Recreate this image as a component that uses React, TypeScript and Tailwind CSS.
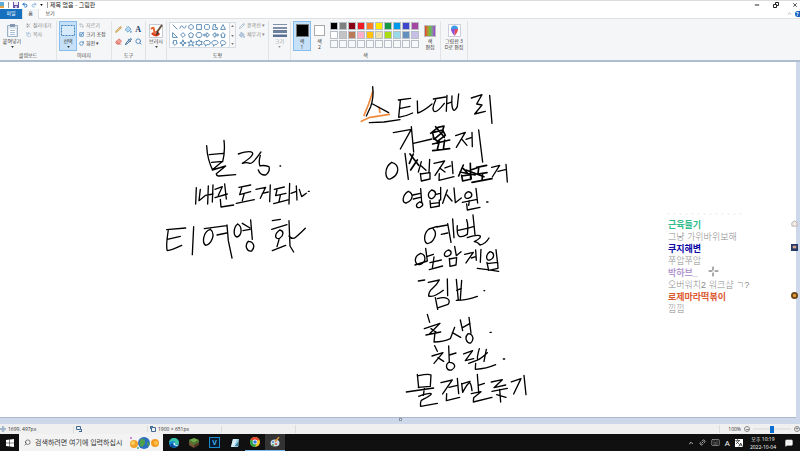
import type { ReactNode } from "react";
import { Scissors, Copy, Crop, Scaling, RotateCw, Pencil, PaintBucket, Eraser, Pipette, Search, Undo2, Redo2, Minus, X, ChevronUp, Move, MessageSquareText, Keyboard, Link2, Languages } from "lucide-react";

const palette = [
  "#000000", "#7f7f7f", "#880015", "#ed1c24", "#ff7f27", "#ffe900", "#159a43", "#0098e8", "#3f48cc", "#a349a4",
  "#ffffff", "#c3c3c3", "#b97a57", "#ffaec9", "#ffc20e", "#efe4b0", "#aadc12", "#99d9ea", "#6490be", "#c8bfe7",
  "#f7f8f9", "#f7f8f9", "#f7f8f9", "#f7f8f9", "#f7f8f9", "#f7f8f9", "#f7f8f9", "#f7f8f9", "#f7f8f9", "#f7f8f9",
];

const shapes = [
  "M1 1 7 7", "M0 6Q2 0 4 4T8 2", "M4 1a3 3 0 1 0 .1 0", "M1 1h6v6H1z", "M2 1h4l1 1v4l-1 1H2L1 6V2z", "M1 7 2 1h3l-1 3 3 1v2z", "M4 1 7 7H1z",
  "M1 1v6h6z", "M4 1 7 4 4 7 1 4z", "M4 1 7 3 6 7H2L1 3z", "M2 1h4l2 3-2 3H2L0 4z", "M0 3h4V1l3 3-3 3V5H0z", "M8 3H4V1L1 4l3 3V5h4z", "M4 1 7 4H6v3H2V4H1z",
  "M4 7 7 4H6V1H2v3H1z", "M4 0 5 3l3 1-3 1-1 3-1-3-3-1 3-1z", "m4 0 1 3h3L6 5l1 3-3-2-3 2 1-3-2-2h3z", "m4 0 1 2h3L7 4l1 2H5L4 8 3 6H0l1-2-1-2h3z", "M2 1h4l2 2v2L6 6H4L2 8V6L0 5V3z", "M4 1C-1 1-1 5 2 6v2l2-2c5 0 5-5 0-5z", "M3 1C0 1 0 6 3 6L2 8l3-2c4 0 3-5-2-5z",
];

const ink = [
  {
    at: "translate(155 130) scale(.3333)",
    d: "M155 47 Q156 70 161 88T172 118M207 31Q211 64 203 95M163 74 205 70M170 97 203 94 190 104 172 120 212 108 184 131Q184 138 192 138L242 134M250 72 Q285 60 292 68T262 100Q276 96 284 100T318 66M316 76Q310 96 315 108 325 104 342 110 346 125 332 135 315 136 310 120M375 108h2" +
      "M124 173 122 222M136 178 132 212 152 196 174 192M160 168 158 222M174 165 172 216M180 178 202 170 190 196M180 203 217 192M209 162 214 207M196 208 198 231 236 225M252 172 287 165M260 174 254 194 287 185M268 190 262 212M244 220 298 209M303 178 332 172 316 205M322 190 340 186M346 165 344 215M358 178 388 171M366 180 362 197 393 190M376 196 372 216M356 221 402 209M404 160 402 222M408 190 424 184M424 168 426 210M433 178 440 200 454 190M460 184h3" +
      "M35 299 92 294M40 300Q32 350 37 362 50 360 80 346M37 328 76 319M116 290 112 374M166 298C142 306 142 340 152 346 168 343 184 312 166 298M148 296 215 287M186 315 215 309M216 285 220 332 231 384M248 282C235 292 234 318 246 321 262 316 262 290 248 282M262 280 285 294M264 302 285 298M287 270 292 328M280 334C268 346 275 366 290 363 302 350 296 335 280 334M352 272 376 268M350 298 396 284M374 300C356 314 360 329 374 325 388 315 386 302 374 300M372 329 366 350M352 362 392 346M402 272 405 348 416 366M402 318Q412 330 422 322T451 295",
  },
  {
    at: "translate(350 80) scale(.3333)",
    d: "M68 20Q72 52 62 80L49 108M68 72 116 98M58 128 102 126 150 119M145 60 182 55M151 62 146 112Q165 110 188 99M148 86 180 79M202 63 203 99Q220 94 246 72M250 57 287 51M257 60Q244 88 252 94T283 70M291 46 289 94M290 72 306 66M306 48Q304 80 309 88T322 80L326 42M364 54 396 44 380 72 396 75 374 102 406 94M419 46 426 130" +
      "M130 158 184 148 151 207M184 140 191 216M190 190 246 177M317 167 346 157 319 202M336 178 351 196M348 178 366 172M366 157 367 200M386 150 398 246M125 247C101 262 104 300 121 297 150 284 150 254 125 247M165 220 175 298M214 245 205 276M213 257 228 271M239 238 237 277M211 280 214 303 240 297 240 278 211 282M252 250 284 243 255 286M269 264 285 276M285 264 302 258M306 244 309 281M268 281 267 301 312 290M425 262 449 256 427 291M444 274 466 269M468 253 472 306" +
      "M175 334C156 345 155 371 169 369 191 360 191 340 175 334M189 345 211 340M190 357 211 352M212 326 215 366M209 366C195 372 197 386 210 382 222 377 220 367 209 366M245 330C229 340 235 360 248 355 262 345 258 332 245 330M258 343 271 340M272 322 272 360M240 362 242 383 268 378 268 360M242 371 268 368M292 330 278 370M291 345 306 363M312 324 316 368 334 354M355 335C340 342 342 358 355 355 370 350 368 338 355 335M337 367 382 358M358 362 356 376M378 325 383 369M350 372 352 390 390 382M410 366h4",
  },
  {
    at: "translate(380 205) scale(.3333)",
    d: "M172 64 147 72C130 85 131 112 142 116 160 114 175 86 160 72M170 66 202 60M184 88 203 84M203 56 213 112M218 42 222 98M232 62Q230 90 238 94T262 88Q266 60 260 44M234 76 261 70M262 70 280 65M279 30 285 89M262 98Q290 88 299 92T283 110Q292 110 300 120 316 118 327 99" +
      "M122 145C98 155 104 184 122 178 140 170 138 148 122 145M137 130 142 168 105 180M142 154 160 148M150 173 184 165M162 156 157 190M148 194 188 183M205 135C189 142 190 157 203 154 217 149 216 138 205 135M224 124 229 152 243 140M208 160 210 184 228 180 230 158 208 162M254 148 280 142 258 174M274 159 287 155M287 135 289 166M303 133 301 172M330 140C315 150 318 169 330 165 346 158 343 142 330 140M348 134 353 176M321 172 326 196 354 190 353 172 321 176M292 190 322 194 356 199" +
      "M115 228 134 225M145 232 178 225Q170 240 158 250T146 273Q156 276 168 270T190 256M202 222 203 272M166 278 173 313M172 281C200 273 215 284 204 298L173 309M229 223 235 286M230 256 244 250M245 226 241 284M229 286Q260 286 292 274M312 257h2",
  },
  {
    at: "translate(390 300) scale(.3333)",
    d: "M112 43 119 67M103 86 150 70 119 101M123 86 139 97M108 105 152 96M135 98 132 126Q160 126 181 116L194 82M187 98 212 112M211 60 218 92M219 82 240 70M237 52 243 99M234 101C222 113 230 131 242 129 254 118 249 102 234 101M300 97h4" +
      "M134 137 142 154M126 168 159 158 132 190M144 173 161 184M176 138 178 187M178 165 198 159M176 187C164 196 170 213 185 210 202 200 192 186 176 187M221 162 248 152 226 182 251 176M236 190 266 179M268 146Q260 174 263 178T292 158M289 148 282 184M257 190 256 208Q290 206 317 194M340 177h4" +
      "M82 223 86 263M86 227Q116 220 123 225L121 259 85 262M49 276 131 264M103 266 100 286M86 289Q118 278 123 281T94 301Q90 310 92 319L142 310M153 248 187 240 158 282M177 262 202 256M202 235 206 281M170 281 169 302 209 292M215 250 218 277Q236 244 240 249T246 272M216 252 240 244M262 223 266 277M265 256 283 250M244 281 273 275 251 293 250 306 306 292M304 246 337 239 312 263 347 255M306 274 352 265M329 268 332 306M320 284 348 292M364 246 393 236 371 282M402 226 408 284",
  },
];

const chat = [
  { name: "근육들기", tone: "text-[#2fbd8c]", text: "그냥 가위바위보해" },
  { name: "쿠지해변", tone: "text-[#0808a4]", text: "쭈압쭈압" },
  { name: "박하브_", tone: "text-[#b49ad2]", text: "오버워치2 워크샵 ㄱ?" },
  { name: "로제마라떡볶이", tone: "text-[#dc5a32]", text: "낍낍" },
];

function Group({ label, width, children }: { label?: string; width: string; children: ReactNode }) {
  return (
    <section className={`flex shrink-0 flex-col border-r border-[#e2e3e4] ${width}`}>
      <div className="flex h-[31px] items-start">{children}</div>
      <div className="text-center leading-[7px] text-[#444]">{label}</div>
    </section>
  );
}

function Row({ icon, label, muted }: { icon: ReactNode; label: string; muted?: boolean }) {
  return (
    <button className={`flex h-[9px] items-center gap-[2px] whitespace-nowrap ${muted ? "text-[#888]" : "text-[#333]"}`}>
      {icon}
      {label}
    </button>
  );
}

function BigButton({ icon, label, className = "", arrow = true }: { icon: ReactNode; label: ReactNode; className?: string; arrow?: boolean }) {
  return (
    <button className={`flex h-[30px] shrink-0 flex-col items-center border pt-px leading-[6px] ${className}`}>
      <span className="flex h-[15px] items-center justify-center">{icon}</span>
      <span>{label}</span>
      {arrow && <Arrow />}
    </button>
  );
}

function Arrow() {
  return (
    <svg viewBox="0 0 4 3" className="mt-[2px] h-[2px] w-[3px] shrink-0" fill="currentColor">
      <path d="M0 0h4L2 3z" />
    </svg>
  );
}

function TitleBar() {
  return (
    <header className="flex h-[9px] items-center border-t border-[#dcdcdc] bg-white pr-[2px]">
      <svg viewBox="0 0 6 8" className="h-[8px] w-[6px]"><path d="M0 1h4v6H0z" fill="#5fa9d8" /><path d="M0 5h4v2H0z" fill="#e9a23b" /></svg>
      <span className="ml-[2px] h-[6px] w-px bg-[#999]" />
      <div className="ml-[4px] flex items-center gap-[3px]">
        <button aria-label="저장">
          <svg viewBox="0 0 6 6" className="size-[6px]"><path d="M0 0h6v6H0z" fill="#6756a5" /><path d="M1 0h4v3H1z" fill="#eeeaf8" /><path d="M2 4h2v2H2z" fill="#cfc7e8" /></svg>
        </button>
        <button aria-label="실행 취소"><Undo2 size={6} color="#2173c9" strokeWidth={4} /></button>
        <button aria-label="다시 실행"><Redo2 size={6} color="#8fb4dc" strokeWidth={4} /></button>
        <button aria-label="빠른 실행 사용자 지정" className="pb-[2px]"><Arrow /></button>
      </div>
      <span className="ml-[4px] h-[6px] w-px bg-[#999]" />
      <h1 className="ml-[2px] text-[6px] leading-[8px] text-[#222]">제목 없음 - 그림판</h1>
      <div className="ml-auto flex items-center gap-[13px] text-[#222]">
        <button aria-label="최소화"><Minus size={6} strokeWidth={4} /></button>
        <button aria-label="이전 크기로">
          <svg viewBox="0 0 6 6" className="size-[6px]" fill="none" stroke="currentColor"><path d="M.5 2.5h3v3h-3zM2.5 2V.5h3v3H4" /></svg>
        </button>
        <button aria-label="닫기"><X size={6} strokeWidth={3} /></button>
      </div>
    </header>
  );
}

function Tabs() {
  return (
    <nav className="flex h-[10px] items-center border-b border-[#dfe0e1] bg-white leading-[9px] text-[#333]">
      <button className="h-[10px] w-[22px] bg-[#1670bd] text-white">파일</button>
      <button className="h-[10px] w-[17px] border-x border-[#e0e1e2] bg-[#f5f6f7]">홈</button>
      <button className="h-[10px] w-[22px]">보기</button>
      <button aria-label="리본 최소화" className="ml-auto text-[#888]"><ChevronUp size={5} strokeWidth={3} /></button>
      <button aria-label="도움말" className="ml-[3px] flex h-[6px] w-[5px] items-center justify-center rounded-l-full bg-[#1260bd] font-bold leading-[6px] text-white">?</button>
    </nav>
  );
}

function Ribbon() {
  return (
    <div className="flex h-[41px] overflow-hidden bg-[#f5f6f7] pt-[2px] text-[#333]">
      <Group label="클립보드" width="w-[57px]">
        <BigButton
          className="w-[24px] border-transparent"
          label="붙여넣기"
          icon={<svg viewBox="0 0 11 13" className="h-[13px] w-[11px]"><path d="M.5 1.5h10v11H.5z" fill="#dfe8f1" stroke="#9cb0c5" /><path d="M3 0h5v3H3z" fill="#8499b0" /><path d="M2 5h7v7H2z" fill="#fff" /><path d="M3 6.500h5M3 8.500h5M3 10.500h5" stroke="#a9c2dc" /></svg>}
        />
        <div className="ml-[2px] flex flex-col">
          <Row muted icon={<Scissors size={5} />} label="잘라내기" />
          <Row muted icon={<Copy size={5} color="#7fa5cd" />} label="복사" />
        </div>
      </Group>
      <Group label="이미지" width="w-[55px]">
        <BigButton
          className="ml-[2px] w-[18px] border-[#86bdec] bg-[#c5e0f7]"
          label="선택"
          icon={<svg viewBox="0 0 14 11" className="h-[11px] w-[14px]"><path d="M.5.5h13v10H.5z" fill="#d7eafa" stroke="#4482b8" strokeDasharray="2 1" /></svg>}
        />
        <div className="ml-[2px] flex flex-col">
          <Row muted icon={<Crop size={5} color="#8a9db2" />} label="자르기" />
          <Row icon={<Scaling size={5} color="#2e76b5" strokeWidth={3} />} label="크기 조정" />
          <Row icon={<RotateCw size={5} color="#2e76b5" strokeWidth={3} />} label="회전 ▾" />
        </div>
      </Group>
      <Group label="도구" width="w-[34px]">
        <div className="grid w-full grid-cols-3 gap-y-[5px] px-[2px] pt-[5px]">
          <button aria-label="연필" className="flex justify-center"><Pencil size={7} color="#b98a48" fill="#edc886" /></button>
          <button aria-label="채우기" className="flex justify-center"><PaintBucket size={7} color="#3a86bf" fill="#b9d8ed" /></button>
          <button aria-label="텍스트" className="h-[7px] font-['Liberation_Serif',serif] text-[8px] font-bold leading-[7px] text-[#1c3f66]">A</button>
          <button aria-label="지우개" className="flex justify-center"><Eraser size={7} color="#d2574a" fill="#f2a196" /></button>
          <button aria-label="색 선택" className="flex justify-center"><Pipette size={7} color="#235a90" strokeWidth={3} /></button>
          <button aria-label="돋보기" className="flex justify-center"><Search size={7} color="#4b83b5" strokeWidth={3} /></button>
        </div>
      </Group>
      <Group width="w-[21px]">
        <BigButton
          className="w-[20px] border-transparent"
          label="브러시"
          icon={<svg viewBox="0 0 14 14" className="size-[14px]"><path d="M.5.5h13v13H.5z" fill="#fff" stroke="#c3cad2" /><path d="M2 5q3-3 3 1t4 1" fill="none" stroke="#e8642e" strokeWidth="2" /><path d="M3 9q4 4 7 0" fill="none" stroke="#d9421c" strokeWidth="3" /><path d="m13 1-5 7" stroke="#68513e" strokeWidth="2" /><path d="m8 7 2 2-3 3z" fill="#333" /></svg>}
        />
      </Group>
      <Group label="도형" width="w-[102px]">
        <div className="ml-[2px] mt-px flex h-[26px] border border-[#d5dce4] bg-white">
          <div className="grid grid-cols-7 pl-px">
            {shapes.map((d) => (
              <button key={d} aria-label="도형" className="flex h-[8px] w-[8px] items-center justify-center">
                <svg viewBox="-1 -1 10 10" className="size-[8px]" fill="none" stroke="#3a74a6"><path d={d} /></svg>
              </button>
            ))}
          </div>
          <div className="ml-[2px] flex w-[6px] flex-col items-center justify-around border-l border-[#d5dce4] bg-[#f7f7f7] text-[#777]"><span className="rotate-180"><Arrow /></span><Arrow /><Arrow /></div>
        </div>
        <div className="ml-[3px] flex flex-col">
          <Row muted icon={<Pencil size={6} color="#7d9cbd" />} label="윤곽선 ▾" />
          <Row muted icon={<PaintBucket size={6} color="#7d9cbd" fill="#b7c9dd" />} label="채우기 ▾" />
        </div>
      </Group>
      <Group width="w-[22px]">
        <BigButton
          className="w-[21px] border-transparent text-[#999]"
          label="크기"
          icon={<svg viewBox="0 0 14 13" className="h-[13px] w-[14px]"><path d="M0 .5h14" stroke="#8090aa" /><path d="M0 4h14" stroke="#8090aa" strokeWidth="2" /><path d="M0 7.500h14" stroke="#6d7f9e" strokeWidth="3" /><path d="M0 12h14" stroke="#5b6f93" strokeWidth="3" /></svg>}
        />
      </Group>
      <Group label="색" width="w-[150px]">
        <BigButton arrow={false} className="ml-[2px] w-[18px] border-[#86bdec] bg-[#c5e0f7]" icon={<span className="size-[13px] border border-[#777] bg-black" />} label={<>색<br />1</>} />
        <BigButton arrow={false} className="w-[17px] border-transparent" icon={<span className="size-[11px] border border-[#aaa] bg-white" />} label={<>색<br />2</>} />
        <div className="ml-[2px] grid grid-cols-10 gap-px pt-px">
          {palette.map((color, i) => (
            <button key={i} aria-label={`색 ${i + 1}`} className="size-[8px] border border-[#b9bec4]" style={{ backgroundColor: color }} />
          ))}
        </div>
        <BigButton
          arrow={false}
          className="ml-px w-[20px] border-transparent"
          icon={<span className="size-[12px] border border-[#bbb] bg-linear-to-r from-[#e03a2f] via-[#5fc33b] to-[#9b35d8]" />}
          label={<>색<br />편집</>}
        />
      </Group>
      <Group width="w-[27px]">
        <BigButton
          arrow={false}
          className="w-[26px] whitespace-nowrap border-transparent"
          icon={<svg viewBox="0 0 13 13" className="size-[13px]"><path d="M.5.500h12v12H.5z" fill="#fff" stroke="#ccd" /><path d="M3 5a3.500 3.500 0 0 1 7 0z" fill="#3b9be6" /><path d="M3 5h4l-.5 7Q3 8 3 5z" fill="#8a56d6" /><path d="M7 5h3q0 3-3.500 7z" fill="#e8485a" /></svg>}
          label={<>그림판 3<br />D로 편집</>}
        />
      </Group>
    </div>
  );
}

function Canvas() {
  return (
    <main className="relative flex min-h-[364px] flex-1 flex-col border-t-2 border-[#aebdd2] bg-[#cdd9ea]">
      <div className="mr-[4px] min-h-[356px] flex-1 overflow-hidden border-b border-[#aab9cc] bg-white pl-px">
        <svg role="img" aria-label="손글씨 게임 목록" viewBox="1 62 795 355" className="h-[355px] w-[795px]" fill="none" strokeLinecap="round" strokeLinejoin="round">
          <g transform="translate(350 80) scale(.3333)" stroke="#f08a3c" strokeWidth="5">
            <path d="M68 35 56 72 42 106M34 124 60 112 118 103M87 82 90 97" />
          </g>
          {ink.map((part) => (
            <g key={part.at} transform={part.at} stroke="#000" strokeWidth="4">
              <path d={part.d} />
            </g>
          ))}
          <g transform="translate(350 80) scale(.3333)" stroke="#000" strokeWidth="5">
            <path d="M242 160 264 142 282 138 276 158 252 178 248 158 278 150 286 166 262 184 250 172M257 140 283 172M248 192 299 180M268 184 262 208M284 180 280 208M248 212 299 206" />
            <path d="M178 250 190 222M180 222 206 256M182 270 202 240" />
            <path d="M340 255 326 288M340 266 355 282M361 250 362 298M362 270 380 264M335 286 338 303 364 297 362 284 335 288M330 276 375 285M380 262 410 256M386 264 384 282 411 278M398 280 396 302M366 307 426 296M348 270 402 290" />
          </g>
          <path d="M668 214h77" stroke="#e4e4e4" strokeDasharray="1 5" />
          <path d="M713 267v3m0 3v3m-4-5h3m3 0h3" stroke="#555" />
        </svg>
      </div>
      <div className="flex h-[6px] shrink-0 justify-center"><span className="size-[3px] border border-[#8791a0] bg-white" /></div>
      <ul className="absolute right-0 top-[157px] w-[132px] font-['Liberation_Sans','Noto_Sans_CJK_KR',sans-serif] text-[9px]">
        {chat.map((line, i) => (
          <li key={line.name} className="flex justify-between">
            <div>
              <p className={`font-bold leading-[12px] ${line.tone}`}>{line.name}</p>
              <p className="leading-[12px] font-light text-[#8a8a8a]">{line.text}</p>
            </div>
            <svg viewBox="0 0 8 8" className="mr-[2px] mt-px size-[7px]">
              {i === 0 && <path d="M1 3 4 1l3 2v4H1z" fill="#f2ece8" stroke="#b7aca8" />}
              {i === 1 && <><path d="M0 0h8v8H0z" fill="#253a66" /><path d="M2 2h4v3H2z" fill="#d9a38c" /></>}
              {i === 3 && <><circle cx="4" cy="4" r="4" fill="#6c4218" /><circle cx="4" cy="4" r="2" fill="#dd9b31" /></>}
            </svg>
          </li>
        ))}
      </ul>
    </main>
  );
}

function StatusBar() {
  return (
    <footer className="flex h-[10px] items-center bg-[#f0f0f0] text-[#333]">
      <div className="flex w-[74px] items-center gap-[2px] border-r border-[#dcdcdc]"><Move size={6} color="#3f6b96" />1699, 497px</div>
      <div className="flex w-[74px] items-center border-r border-[#dcdcdc] pl-[2px]">
        <svg viewBox="0 0 6 6" className="size-[6px]" fill="none" stroke="#3f6b96"><path d="M.5.5h4v3h-4zM3 5.500h3M5.500 3v3" /></svg>
      </div>
      <div className="flex w-[74px] items-center gap-[2px] border-r border-[#dcdcdc] pl-[2px]">
        <svg viewBox="0 0 6 6" className="size-[6px]" fill="none" stroke="#3f6b96"><path d="M1.500 1.500h4v4h-4zM0 .5h3M.5 0v3" /></svg>
        1900 × 651px
      </div>
      <div className="h-[8px] w-[74px] border-r border-[#dcdcdc]" />
      <div className="ml-auto flex items-center gap-[3px] border-l border-[#dcdcdc] pl-[8px]">
        <label htmlFor="zoom">100%</label>
        <button aria-label="축소" className="flex size-[6px] items-center justify-center rounded-full border border-[#888]"><Minus size={3} strokeWidth={5} /></button>
        <input id="zoom" type="range" defaultValue={50} className="h-[8px] w-[38px] appearance-none bg-linear-to-b from-transparent from-40% via-[#cfcfcf] via-50% to-transparent to-60% [&::-webkit-slider-thumb]:h-[7px] [&::-webkit-slider-thumb]:w-[4px] [&::-webkit-slider-thumb]:appearance-none [&::-webkit-slider-thumb]:bg-[#0a6ed1]" />
        <button aria-label="확대" className="flex size-[6px] items-center justify-center rounded-full border border-[#888] leading-[4px]">+</button>
      </div>
    </footer>
  );
}

function TaskBar() {
  return (
    <footer className="flex h-[17px] items-center bg-[#101010] text-white">
      <button aria-label="시작" className="flex w-[19px] justify-center">
        <svg viewBox="0 0 8 8" className="size-[8px]" fill="#fff"><path d="m0 1 3.500-.5v3.200H0zM4 .5 8 0v3.700H4zM0 4.200h3.500v3.300L0 7zM4 4.200h4V8l-4-.5z" /></svg>
      </button>
      <div className="flex h-[17px] w-[144px] items-center bg-[#f3f3f3] pl-[5px] text-[#333]">
        <Search size={7} className="shrink-0 -scale-x-100" />
        <input aria-label="검색" defaultValue="검색하려면 여기에 입력하십시" className="ml-[4px] w-[92px] bg-transparent text-[7px] leading-[12px] outline-none" />
        <svg viewBox="0 0 32 14" className="h-[14px] w-[32px]">
          <circle cx="7" cy="8" r="4" fill="#f0a22c" /><circle cx="6" cy="7" r="2" fill="#fbd15b" /><circle cx="17" cy="7" r="6" fill="#2b6fc0" /><path d="M14 3q4-1 4 3t-4 5q-3-4 0-8M20 6l3 1-2 4z" fill="#4ea04e" /><circle cx="28" cy="7" r="4" fill="#f29a22" /><circle cx="29" cy="7" r="2" fill="#fbc04c" /><circle cx="4" cy="2" r="1" fill="#c667d8" /><circle cx="11" cy="12" r="1" fill="#3bb08a" />
        </svg>
      </div>
      <div className="flex h-[17px]">
        <button aria-label="Edge" className="flex w-[21px] items-center justify-center">
          <svg viewBox="0 0 10 10" className="size-[10px]"><circle cx="5" cy="5" r="5" fill="#1688d4" /><path d="M0 5a5 5 0 0 1 10 0q0 2-4 1.500Q7 3 4 3 1 3 0 5z" fill="#39c5a5" /><path d="M4 5q-1 4 4 3-3 3-6 1-2-3 2-4z" fill="#0b4d94" /><path d="M4.500 4.500q2 0 1.500 2 2 1 4 0-1 2-4 1-2-1-1.500-3z" fill="#fff" /></svg>
        </button>
        <button aria-label="Minecraft" className="flex w-[20px] items-center justify-center">
          <svg viewBox="0 0 10 10" className="size-[10px]"><path d="m5 0 5 2-5 3-5-3z" fill="#71a848" /><path d="m0 2 5 3v5L0 7z" fill="#795437" /><path d="m10 2-5 3v5l5-3z" fill="#543824" /><path d="m0 2 5 3 5-3v2L5 7 0 4z" fill="#4f7b34" /></svg>
        </button>
        <button aria-label="Vegas" className="flex w-[21px] items-center justify-center">
          <span className="size-[11px] border border-[#1b8acb] bg-[#071b30] text-[7px] font-bold leading-[9px] text-[#46aee9]">V</span>
        </button>
        <button aria-label="메모장" className="flex w-[20px] items-center justify-center">
          <svg viewBox="0 0 10 10" className="size-[10px]"><path d="M3 1h6L8 9H1z" fill="#9bd0e6" /><path d="M3 1h4L4 9H1z" fill="#d6edf5" /><path d="M8 4 5 8h4z" fill="#3e7f98" /></svg>
        </button>
        <button aria-label="Chrome" className="flex w-[20px] items-center justify-center border-b border-[#76b9ed]">
          <svg viewBox="0 0 10 10" className="size-[10px]"><circle cx="5" cy="5" r="5" fill="#f7c52b" /><path d="M5 5 .7 2.500a5 5 0 0 1 8.600 0z" fill="#e44332" /><path d="M5 5 .7 2.500A5 5 0 0 0 5 10l2-4z" fill="#2ba24c" /><circle cx="5" cy="5" r="2.400" fill="#fff" /><circle cx="5" cy="5" r="1.800" fill="#3b78e7" /></svg>
        </button>
        <button aria-label="그림판" className="flex w-[20px] items-center justify-center border-b border-[#76b9ed] bg-[#333]">
          <svg viewBox="0 0 10 10" className="size-[10px]"><ellipse cx="5" cy="6" rx="4.500" ry="3.500" fill="#cbdde9" /><circle cx="3" cy="5" r="1" fill="#3c8ed0" /><circle cx="3" cy="8" r="1" fill="#4c9b50" /><circle cx="6" cy="7" r="1" fill="#d0503c" /><path d="M9 0 5 5" stroke="#d99136" strokeWidth="1.500" /></svg>
        </button>
      </div>
      <div className="ml-auto flex items-center gap-[5px] pr-[7px]">
        <button aria-label="숨겨진 아이콘"><ChevronUp size={6} strokeWidth={3} /></button>
        <Link2 size={7} className="-rotate-45" />
        <Keyboard size={9} className="text-[#999]" />
        <span className="text-[8px] leading-[9px]">A</span>
        <Languages size={8} className="bg-white text-[#111]" />
        <div className="ml-[2px] text-center leading-[8px]"><p>오후 10:19</p><p>2022-10-04</p></div>
        <button aria-label="알림" className="ml-[4px]"><MessageSquareText size={8} fill="#fff" color="#ddd" /></button>
      </div>
    </footer>
  );
}

export default function App() {
  return (
    <div className="flex min-h-screen flex-col overflow-hidden bg-white font-['Open_Sans','Noto_Sans_CJK_KR',sans-serif] text-[5px] leading-[7px]">
      <TitleBar />
      <Tabs />
      <Ribbon />
      <Canvas />
      <StatusBar />
      <TaskBar />
    </div>
  );
}
